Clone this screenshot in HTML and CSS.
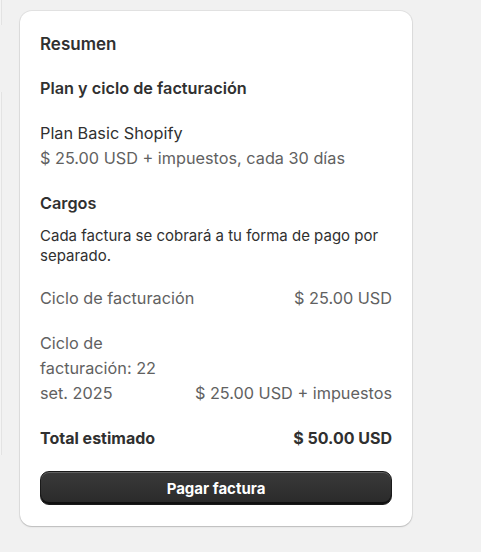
FILE: index.html
```html
<!DOCTYPE html>
<html lang="es">
<head>
<meta charset="utf-8">
<link rel="stylesheet" href="styles.css">
</head>
<body>
<div class="layout">
  <div class="side">
    <div class="side-card side-card-top"></div>
    <div class="side-card side-card-main"></div>
  </div>
  <section class="card">
    <h2 class="title">Resumen</h2>
    <h3 class="subtitle">Plan y ciclo de facturación</h3>
    <div class="plan">
      <p class="plan-name">Plan Basic Shopify</p>
      <p class="muted">$ 25.00 USD + impuestos, cada 30 días</p>
    </div>
    <h3 class="subtitle cargos">Cargos</h3>
    <p class="note">Cada factura se cobrará a tu forma de pago por separado.</p>
    <div class="row muted first-row">
      <span>Ciclo de facturación</span>
      <span class="val">$ 25.00 USD</span>
    </div>
    <div class="row muted wrap-row">
      <span class="label">Ciclo de facturación: 22 set. 2025</span>
      <span class="val">$ 25.00 USD + impuestos</span>
    </div>
    <div class="row total">
      <span>Total estimado</span>
      <span class="val">$ 50.00 USD</span>
    </div>
    <button class="pay">Pagar factura</button>
  </section>
</div>
</body>
</html>
```

FILE: styles.css
```css
* { box-sizing: border-box; }
html, body { margin: 0; padding: 0; }
body {
  background: #f1f1f1;
  font-family: Inter, "Noto Sans", sans-serif;
  color: #303030;
  width: 481px;
  height: 552px;
  overflow: hidden;
}
.layout {
  display: flex;
  padding-top: 11px;
}
.side {
  width: 20px;
  margin-top: -11px;
  display: flex;
  flex-direction: column;
  gap: 67px;
}
.side-card {
  width: 2px;
  background: #f4f4f4;
  border-right: 1px solid #e3e3e3;
}
.side-card-top { height: 25px; }
.side-card-main { height: 363px; }
.card {
  width: 392px;
  background: #fff;
  border-radius: 12px;
  box-shadow: 0 1px 0 0 rgba(26,26,26,0.07), 0 0 0 1px rgba(0,0,0,0.06), 0 1px 2px rgba(0,0,0,0.12);
  padding: 20px 20px 21px;
  display: flex;
  flex-direction: column;
}
h2, h3, p { margin: 0; }
.title {
  font-size: 17px;
  font-weight: 600;
  line-height: 24px;
  margin-top: 1px;
}
.subtitle {
  font-size: 16.25px;
  font-weight: 600;
  line-height: 24px;
  margin-top: 20px;
}
.plan { margin-top: 21px; }
.plan-name { font-size: 16.25px; line-height: 25px; color: #303030; }
.muted { color: #616161; font-size: 16.25px; line-height: 25px; }
.cargos { margin-top: 20px; }
.note {
  margin-top: 11px;
  font-size: 15px;
  line-height: 20px;
  color: #303030;
}
.row {
  display: flex;
  justify-content: space-between;
  align-items: flex-end;
  gap: 16px;
}
.val { flex-shrink: 0; text-align: right; }
.first-row { margin-top: 20px; }
.wrap-row { margin-top: 20px; }
.label { flex: 1; }
.total {
  margin-top: 20px;
  font-size: 16px;
  line-height: 24px;
  font-weight: 700;
}
.pay {
  margin-top: 21px;
  height: 34px;
  width: 100%;
  border-radius: 9px;
  border: 1px solid #1a1a1a;
  background: linear-gradient(#3a3a3a, #303030 60%, #2a2a2a);
  box-shadow: inset 0 1px 0 rgba(255,255,255,0.2), inset 0 -2px 0 rgba(0,0,0,0.6);
  color: #fff;
  font-family: Inter, "Noto Sans", sans-serif;
  font-size: 15px;
  font-weight: 700;
}
```
